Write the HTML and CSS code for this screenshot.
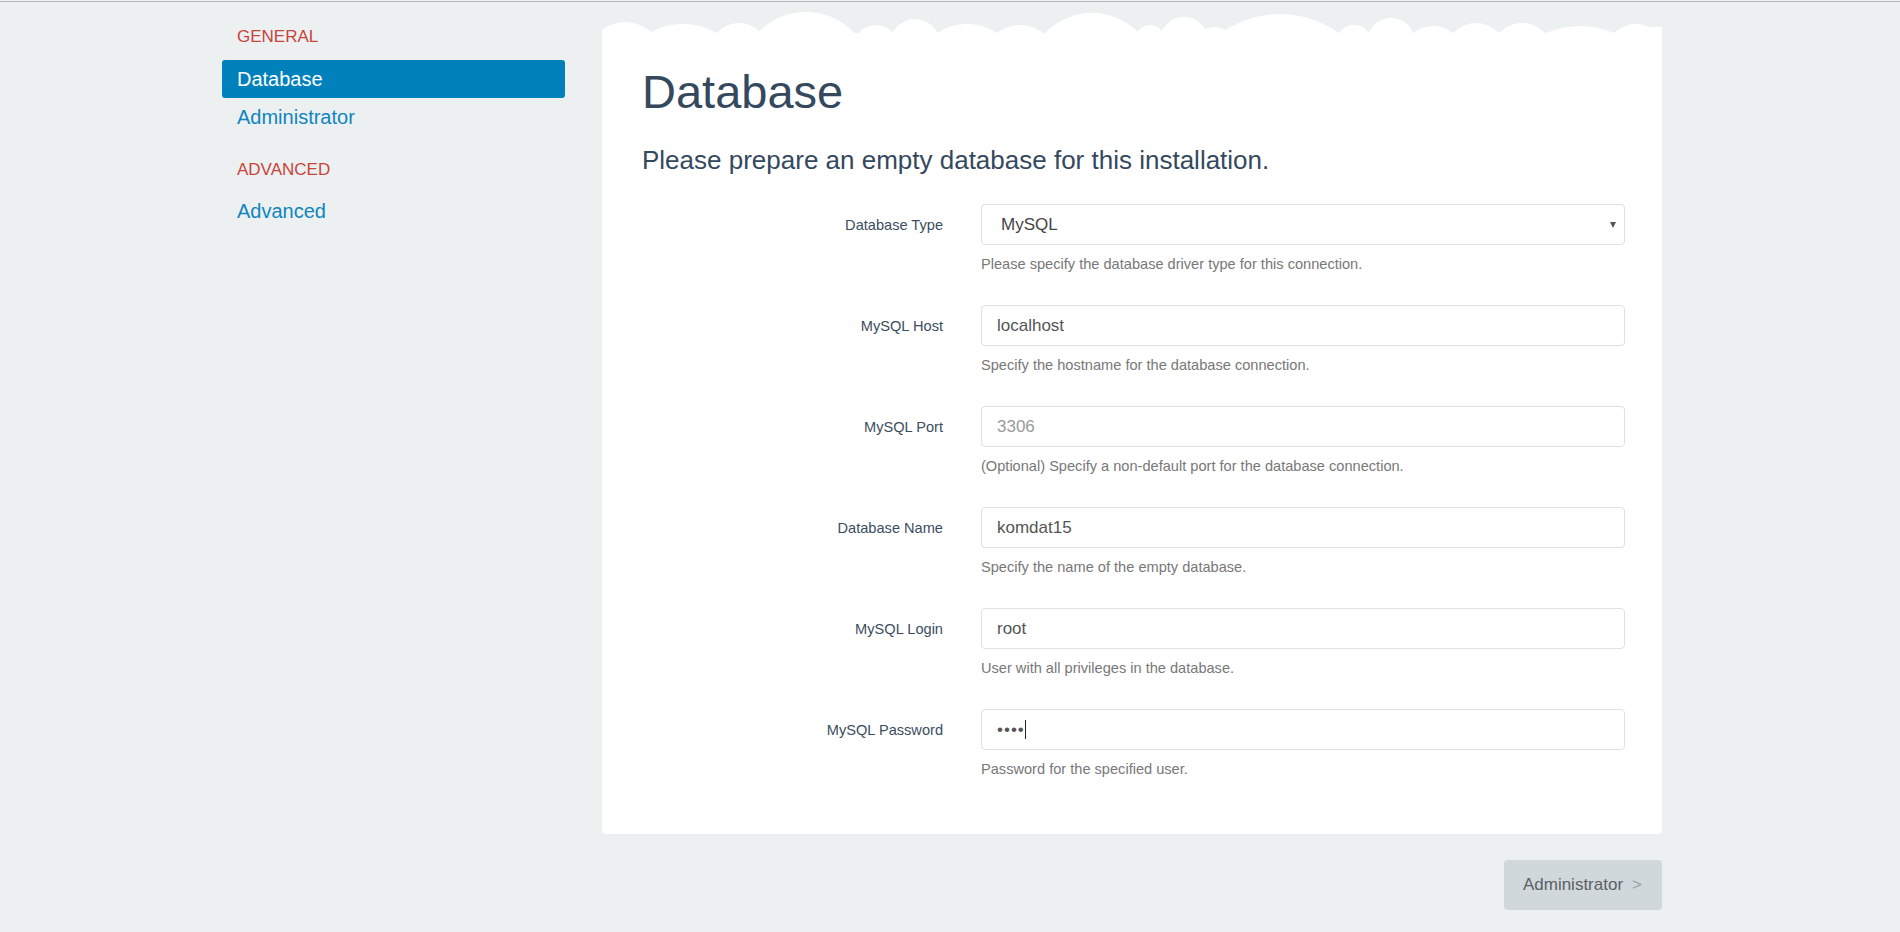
FILE: index.html
```html
<!DOCTYPE html>
<html lang="en">
<head>
<meta charset="utf-8">
<title>Installation - Database</title>
<link rel="stylesheet" href="styles.css">
</head>
<body>
<div class="topline"></div>
<div class="layout">
  <aside class="sidebar">
    <div class="nav-group">
      <h3 class="nav-title">General</h3>
      <ul class="nav-list">
        <li><a class="nav-link active" href="#">Database</a></li>
        <li><a class="nav-link" href="#">Administrator</a></li>
      </ul>
    </div>
    <div class="nav-group">
      <h3 class="nav-title">Advanced</h3>
      <ul class="nav-list">
        <li><a class="nav-link" href="#">Advanced</a></li>
      </ul>
    </div>
  </aside>

  <main class="main">
    <section class="card">
      <svg class="clouds" width="1060" height="40" viewBox="0 0 1060 40" aria-hidden="true">
        <g fill="#fff">
          <rect x="0" y="22" width="1060" height="18"/>
          <circle cx="23" cy="49.6" r="38.6"/>
          <circle cx="81" cy="79.8" r="66.8"/>
          <circle cx="137" cy="41.2" r="29.2"/>
          <circle cx="204" cy="67.5" r="66.5"/>
          <circle cx="274" cy="37.1" r="23.1"/>
          <circle cx="313" cy="33" r="25"/>
          <circle cx="365" cy="65.8" r="52.8"/>
          <circle cx="418" cy="51" r="37"/>
          <circle cx="490" cy="67.2" r="65.2"/>
          <circle cx="548" cy="27.75" r="13.75"/>
          <circle cx="582" cy="30.5" r="24.5"/>
          <circle cx="612" cy="36" r="20"/>
          <circle cx="678" cy="104" r="101"/>
          <circle cx="752" cy="32" r="18"/>
          <circle cx="789" cy="31.4" r="24.4"/>
          <circle cx="831" cy="45.6" r="30.6"/>
          <circle cx="874" cy="43.5" r="31.5"/>
          <circle cx="920" cy="43.5" r="31.5"/>
          <circle cx="978" cy="101" r="86"/>
          <circle cx="1034" cy="44.4" r="31.4"/>
          <rect x="1040" y="16" width="20" height="24"/>
        </g>
      </svg>

      <h1 class="title">Database</h1>
      <p class="lead">Please prepare an empty database for this installation.</p>

      <form class="form">
        <div class="form-row">
          <label class="form-label">Database Type</label>
          <div class="select-wrap">
            <select class="control control-select">
              <option>MySQL</option>
            </select>
          </div>
          <p class="help">Please specify the database driver type for this connection.</p>
        </div>

        <div class="form-row">
          <label class="form-label">MySQL Host</label>
          <input class="control" type="text" value="localhost">
          <p class="help">Specify the hostname for the database connection.</p>
        </div>

        <div class="form-row">
          <label class="form-label">MySQL Port</label>
          <input class="control" type="text" placeholder="3306">
          <p class="help">(Optional) Specify a non-default port for the database connection.</p>
        </div>

        <div class="form-row">
          <label class="form-label">Database Name</label>
          <input class="control" type="text" value="komdat15">
          <p class="help">Specify the name of the empty database.</p>
        </div>

        <div class="form-row">
          <label class="form-label">MySQL Login</label>
          <input class="control" type="text" value="root">
          <p class="help">User with all privileges in the database.</p>
        </div>

        <div class="form-row">
          <label class="form-label">MySQL Password</label>
          <div class="control control-password"><span class="dots">••••</span><span class="caret"></span></div>
          <p class="help">Password for the specified user.</p>
        </div>
      </form>
    </section>

    <div class="actions">
      <button class="btn-next" type="button">Administrator<span class="btn-arrow">&gt;</span></button>
    </div>
  </main>
</div>
</body>
</html>
```

FILE: styles.css
```css
html {
  background: #ecf0f1;
}

body {
  margin: 0;
  font-family: "Liberation Sans", Arial, sans-serif;
  color: #34495e;
}

.topline {
  height: 1px;
  margin-top: 1px;
  background: #b5b7b8;
}

.layout {
  display: flex;
  gap: 37px;
  width: 1440px;
  margin: 0 0 0 222px;
}

/* Sidebar */
.sidebar {
  width: 343px;
  flex: none;
  padding-top: 25px;
}

.nav-group + .nav-group {
  margin-top: 24px;
}

.nav-title {
  margin: 0 0 13px 15px;
  font-size: 17px;
  line-height: 20px;
  font-weight: normal;
  text-transform: uppercase;
  color: #c8443b;
}

.nav-group + .nav-group .nav-title {
  margin-bottom: 12px;
}

.nav-list {
  list-style: none;
  margin: 0;
  padding: 0;
}

.nav-link {
  display: block;
  height: 38px;
  line-height: 38px;
  padding-left: 15px;
  font-size: 20px;
  color: #1085be;
  text-decoration: none;
  border-radius: 3px;
}

.nav-link.active {
  background: #0181bb;
  color: #fff;
}

/* Main card */
.main {
  width: 1060px;
  flex: none;
}

.card {
  position: relative;
  margin-top: 31px;
  padding: 33px 37px 55px 40px;
  background: #fff;
  border-radius: 0 0 4px 4px;
}

.clouds {
  position: absolute;
  left: 0;
  top: -22px;
  display: block;
}

.title {
  position: relative;
  margin: 0;
  font-size: 47px;
  line-height: 52px;
  font-weight: normal;
  color: #34495e;
}

.lead {
  margin: 28px 0 30px;
  font-size: 26px;
  line-height: 28px;
  color: #34495e;
}

.form {
  margin: 0;
}

.form-row {
  display: grid;
  grid-template-columns: 301px 1fr;
  column-gap: 38px;
  margin-bottom: 31px;
}

.form-row:last-child {
  margin-bottom: 0;
}

.form-label {
  grid-column: 1;
  grid-row: 1;
  align-self: center;
  text-align: right;
  font-size: 14.6px;
  line-height: 20px;
  color: #3b4d5f;
}

.control,
.select-wrap {
  grid-column: 2;
  grid-row: 1;
}

.control {
  display: block;
  box-sizing: border-box;
  width: 100%;
  height: 41px;
  margin: 0;
  padding: 0 15px;
  border: 1px solid #dde1e3;
  border-radius: 4px;
  background: #fff;
  font-family: "Liberation Sans", Arial, sans-serif;
  font-size: 17px;
  color: #555;
  outline: none;
}

.control::placeholder {
  color: #9a9a9a;
}

.select-wrap {
  position: relative;
}

.control-select {
  appearance: none;
  -webkit-appearance: none;
  padding-left: 19px;
  color: #444;
}

.select-wrap::after {
  content: "";
  position: absolute;
  right: 9px;
  top: 18px;
  border-left: 3.5px solid transparent;
  border-right: 3.5px solid transparent;
  border-top: 6px solid #555;
}

.control-password {
  display: flex;
  align-items: center;
}

.dots {
  font-size: 17px;
  letter-spacing: 1px;
  color: #555;
}

.caret {
  width: 1px;
  height: 19px;
  margin-left: 0;
  background: #222;
}

.help {
  grid-column: 2;
  grid-row: 2;
  margin: 9px 0 0;
  font-size: 14.6px;
  line-height: 20px;
  color: #787878;
}

/* Footer action */
.actions {
  display: flex;
  justify-content: flex-end;
  margin-top: 26px;
}

.btn-next {
  height: 50px;
  padding: 0 20px 0 19px;
  border: 0;
  border-radius: 4px;
  background: #d1d8dc;
  font-family: "Liberation Sans", Arial, sans-serif;
  font-size: 17px;
  color: #5a6064;
}

.btn-arrow {
  margin-left: 9px;
  color: #9aa1a5;
}
```
